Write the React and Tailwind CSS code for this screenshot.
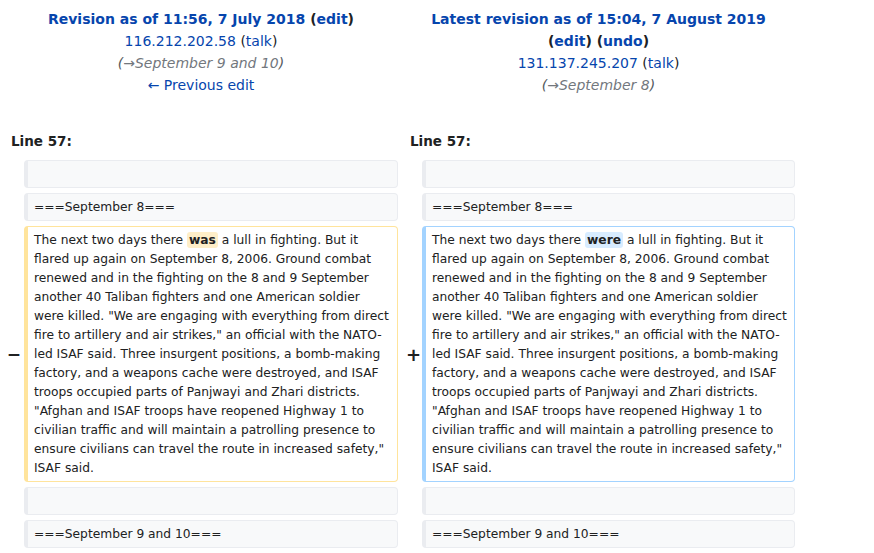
import React from 'react';

const para = (word, cls) => (
  <>
    The next two days there <span className={`font-bold rounded-[3px] px-[2px] py-[1px] ${cls}`}>{word}</span> a lull in fighting. But it flared up again on September 8, 2006. Ground combat renewed and in the fighting on the 8 and 9 September another 40 Taliban fighters and one American soldier were killed. "We are engaging with everything from direct fire to artillery and air strikes," an official with the NATO-led ISAF said. Three insurgent positions, a bomb-making factory, and a weapons cache were destroyed, and ISAF troops occupied parts of Panjwayi and Zhari districts. "Afghan and ISAF troops have reopened Highway 1 to civilian traffic and will maintain a patrolling presence to ensure civilians can travel the route in increased safety," ISAF said.
  </>
);

const Context = ({ children }) => (
  <div className="bg-[#f8f9fa] border border-[#eaecf0] border-l-4 rounded-[4px] px-[6px] py-[3.5px] leading-[19px] min-h-[28px] whitespace-pre-wrap">
    {children}
  </div>
);

export default function App() {
  const link = 'text-[#0645ad]';
  return (
    <div className="w-[874px] h-[553px] bg-white overflow-hidden text-[#202122]" style={{ fontFamily: '"DejaVu Sans", sans-serif' }}>
      <div className="pl-[4px] grid grid-cols-[16px_374px_16px_373px] gap-x-[4px] gap-y-[5px] text-[12.25px]">
        {/* headers */}
        <div className="col-span-2 text-center text-[14px] leading-[22px] pt-[8px]">
          <div className="font-bold">
            <span className={link}>Revision as of 11:56, 7 July 2018</span> (<span className={link}>edit</span>)
          </div>
          <div><span className={link}>116.212.202.58</span> (<span className={link}>talk</span>)</div>
          <div className="italic text-[#54595d]">(<span className="text-[#72777d]">→September 9 and 10</span>)</div>
          <div className={link}>← Previous edit</div>
        </div>
        <div className="col-span-2 text-center text-[14px] leading-[22px] pt-[8px]">
          <div className="font-bold">
            <span className={link}>Latest revision as of 15:04, 7 August 2019</span>
          </div>
          <div className="font-bold">(<span className={link}>edit</span>) (<span className={link}>undo</span>)</div>
          <div><span className={link}>131.137.245.207</span> (<span className={link}>talk</span>)</div>
          <div className="italic text-[#54595d]">(<span className="text-[#72777d]">→September 8</span>)</div>
        </div>

        {/* line numbers */}
        <div className="col-span-2 font-bold text-[13.5px] pl-[7px] pt-[30px] pb-[4px]">Line 57:</div>
        <div className="col-span-2 font-bold text-[13.5px] pl-[8px] pt-[30px] pb-[4px]">Line 57:</div>

        <div />
        <Context>{' '}</Context>
        <div />
        <Context>{' '}</Context>

        <div />
        <Context>===September 8===</Context>
        <div />
        <Context>===September 8===</Context>

        <div className="flex items-center justify-end -mr-[1px] text-[17px] font-bold">−</div>
        <div className="border border-[#ffe49c] border-l-4 rounded-[4px] px-[6px] py-[3.5px] leading-[19px]">
          {para('was', 'bg-[#feeec8]')}
        </div>
        <div className="flex items-center justify-end -mr-[3px] text-[18px] font-bold">+</div>
        <div className="border border-[#a3d3ff] border-l-4 rounded-[4px] px-[6px] py-[3.5px] leading-[19px]">
          {para('were', 'bg-[#d8ecff]')}
        </div>

        <div />
        <Context>{' '}</Context>
        <div />
        <Context>{' '}</Context>

        <div />
        <Context>===September 9 and 10===</Context>
        <div />
        <Context>===September 9 and 10===</Context>
      </div>
    </div>
  );
}
